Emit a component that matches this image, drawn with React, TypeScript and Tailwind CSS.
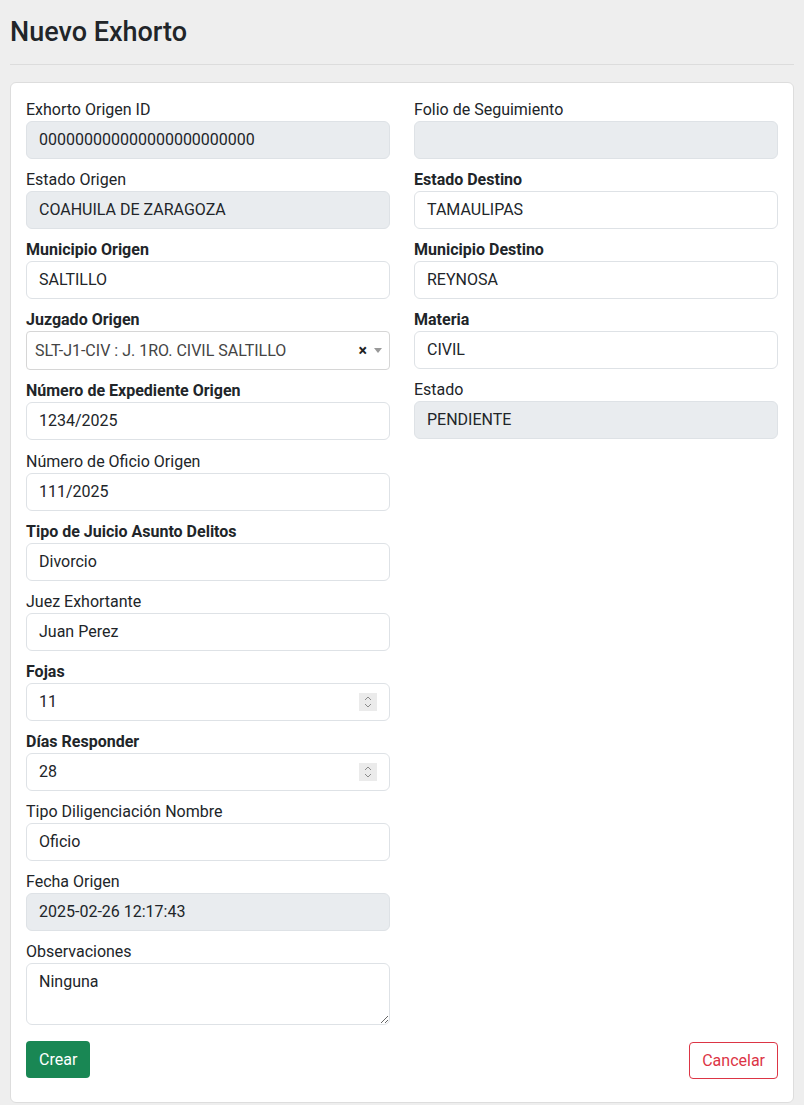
const fieldBase =
  "h-[38px] w-full rounded-[6px] border border-[#dee2e6] px-3 flex items-center text-[16px] text-[#212529]";

const labelBase = "h-[22px] text-[16px] leading-[22px] text-[#212529] whitespace-nowrap";

function Field({
  label,
  value,
  bold,
  disabled,
}: {
  label: string;
  value: string;
  bold?: boolean;
  disabled?: boolean;
}) {
  return (
    <div>
      <div className={`${labelBase} ${bold ? "font-bold" : ""}`}>{label}</div>
      <div className={`${fieldBase} ${disabled ? "bg-[#e9ecef]" : "bg-white"}`}>{value}</div>
    </div>
  );
}

function NumberField({ label, value }: { label: string; value: string }) {
  return (
    <div>
      <div className={`${labelBase} font-bold`}>{label}</div>
      <div className={`${fieldBase} bg-white justify-between pr-[12px]`}>
        <span>{value}</span>
        <span className="flex h-[18px] w-[18px] flex-col items-center justify-center bg-[#ebebeb]">
          <svg width="8" height="14" viewBox="0 0 8 14" fill="none" stroke="#8a8a8a" strokeWidth="1">
            <path d="M1 5 L4 2 L7 5" />
            <path d="M1 9 L4 12 L7 9" />
          </svg>
        </span>
      </div>
    </div>
  );
}

export default function App() {
  return (
    <div className="min-h-[1105px] bg-[#eeeeee] px-[10px] pt-[16px] font-['Roboto',sans-serif] text-[#212529]">
      <h2 className="text-[27px] font-medium leading-[32px]">Nuevo Exhorto</h2>
      <hr className="mt-[16px] border-t border-[#dcdcdc]" />

      <div className="mt-[17px] rounded-[6px] border border-[#dddddd] bg-white px-[15px] pt-[16px] pb-[23px]">
        <div className="grid grid-cols-2 gap-x-[24px]">
          <div className="flex flex-col gap-[10px]">
            <Field label="Exhorto Origen ID" value="000000000000000000000000" disabled />
            <Field label="Estado Origen" value="COAHUILA DE ZARAGOZA" disabled />
            <Field label="Municipio Origen" value="SALTILLO" bold />
            <div>
              <div className={`${labelBase} font-bold`}>Juzgado Origen</div>
              <div className="flex h-[39px] items-center justify-between rounded-[4px] border border-[#d6d6d6] bg-white pl-[8px] pr-[7px]">
                <span className="text-[16px] text-[#444444]">SLT-J1-CIV : J. 1RO. CIVIL SALTILLO</span>
                <span className="flex items-center gap-[7px]">
                  <span className="text-[16px] font-bold leading-none text-[#222]">×</span>
                  <svg width="8" height="5" viewBox="0 0 8 5">
                    <path d="M0 0 L8 0 L4 5 Z" fill="#999999" />
                  </svg>
                </span>
              </div>
            </div>
            <Field label="Número de Expediente Origen" value="1234/2025" bold />
            <div className="mt-[1px]">
              <Field label="Número de Oficio Origen" value="111/2025" />
            </div>
            <Field label="Tipo de Juicio Asunto Delitos" value="Divorcio" bold />
            <Field label="Juez Exhortante" value="Juan Perez" />
            <NumberField label="Fojas" value="11" />
            <NumberField label="Días Responder" value="28" />
            <Field label="Tipo Diligenciación Nombre" value="Oficio" />
            <Field label="Fecha Origen" value="2025-02-26 12:17:43" disabled />
            <div>
              <div className={labelBase}>Observaciones</div>
              <textarea
                readOnly
                value="Ninguna"
                className="block h-[62px] w-full rounded-[6px] border border-[#dee2e6] px-3 py-[6px] text-[16px] leading-[24px] text-[#212529] outline-none"
              />
            </div>
          </div>

          <div className="flex flex-col gap-[10px]">
            <Field label="Folio de Seguimiento" value="" disabled />
            <Field label="Estado Destino" value="TAMAULIPAS" bold />
            <Field label="Municipio Destino" value="REYNOSA" bold />
            <Field label="Materia" value="CIVIL" bold />
            <Field label="Estado" value="PENDIENTE" disabled />
          </div>
        </div>

        <div className="mt-[16px] flex items-start justify-between">
          <button
            type="button"
            className="h-[37px] rounded-[4px] bg-[#198754] px-[13px] text-[16px] text-white"
          >
            Crear
          </button>
          <button
            type="button"
            className="mt-[1px] h-[37px] rounded-[4px] border border-[#dc3545] bg-white px-[12px] text-[16px] text-[#dc3545]"
          >
            Cancelar
          </button>
        </div>
      </div>
    </div>
  );
}
